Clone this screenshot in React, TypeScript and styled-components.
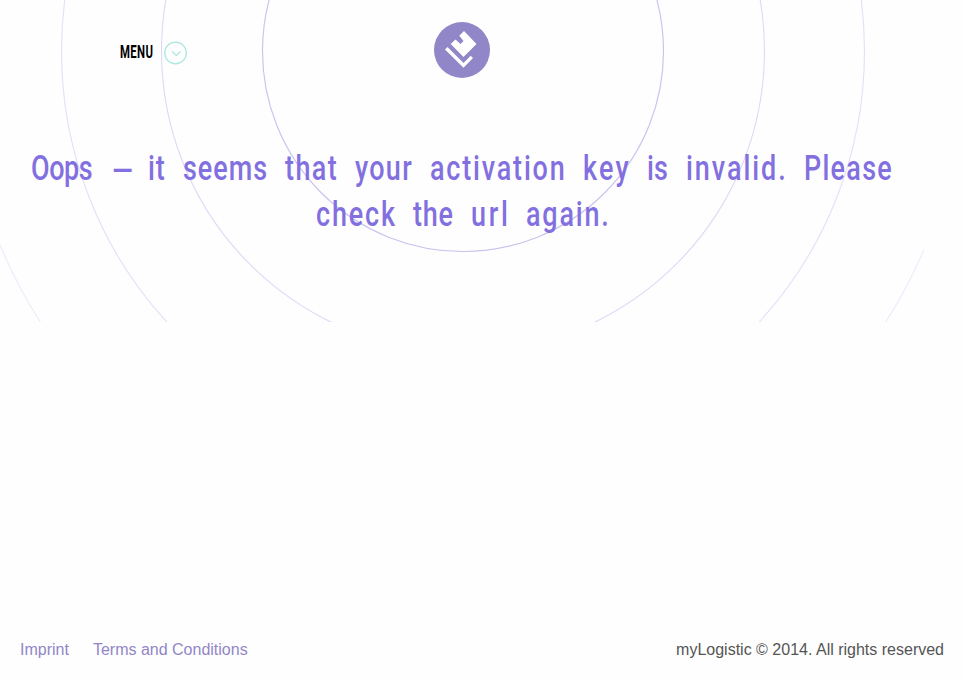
import { useLayoutEffect, useRef, useState } from "react";
import styled, { createGlobalStyle } from "styled-components";

const GlobalStyle = createGlobalStyle`
  body {
    margin: 0;
    background: #fefefe;
    font-family: "Liberation Sans", Arial, sans-serif;
    overflow: hidden;
  }
`;

const Page = styled.div`
  display: flex;
  flex-direction: column;
  justify-content: space-between;
  height: 679px;
`;

const Hero = styled.section`
  position: relative;
  width: 924px;
  height: 322px;
`;

const Rings = styled.svg`
  position: absolute;
  inset: 0;
`;

const Header = styled.header`
  position: relative;
  display: grid;
  grid-template-columns: 434px 56px;
  padding-top: 22px;
  height: 56px;
`;

const MenuButton = styled.div`
  display: flex;
  align-items: center;
  gap: 11px;
  padding: 4px 0 0 120px;
  height: 54px;
  color: #000;
`;

const MenuLabel = styled.div`
  display: flex;
  height: 22px;
  line-height: 20px;
  font-family: Roboto, sans-serif;
  font-size: 17.5px;
  font-weight: 700;
`;

const Title = styled.h1`
  position: relative;
  margin: 68px 0 0;
  color: #8370e0;
  font-family: Roboto, sans-serif;
  font-size: 35px;
  font-weight: 500;
`;

const Line = styled.div<{ $start: number }>`
  display: flex;
  gap: 18px;
  height: 46px;
  line-height: 46px;
  padding-left: ${(p) => p.$start}px;
`;

const WordBox = styled.span<{ $width: number; $drop: number }>`
  display: block;
  flex: none;
  width: ${(p) => p.$width}px;
  margin-top: ${(p) => p.$drop}px;
`;

const Glyphs = styled.span<{ $squeeze: number }>`
  display: inline-block;
  white-space: nowrap;
  transform: scaleX(${(p) => p.$squeeze});
  transform-origin: 0 50%;
`;

const Footer = styled.footer`
  display: flex;
  justify-content: space-between;
  height: 38px;
  padding: 0 20px;
  font-size: 16px;
  line-height: 18px;
  color: #555;
`;

const Links = styled.nav`
  display: flex;
  gap: 24px;
`;

const FooterLink = styled.a`
  color: #9186c7;
`;

type WordProps = { text: string; width: number; squeeze?: number; drop?: number };

/** Condensed word whose tracking is computed to fill the given width. */
function Word({ text, width, squeeze = 0.77, drop = 0 }: WordProps) {
  const ref = useRef<HTMLSpanElement>(null);
  const [tracking, setTracking] = useState(0);
  useLayoutEffect(() => {
    if (ref.current && text.length > 1) {
      const natural = ref.current.offsetWidth - tracking * text.length;
      setTracking((width / squeeze - natural) / (text.length - 1));
    }
  }, []);
  return (
    <WordBox $width={width} $drop={drop}>
      <Glyphs ref={ref} $squeeze={squeeze} style={{ letterSpacing: tracking }}>
        {text}
      </Glyphs>
    </WordBox>
  );
}

const lines: { start: number; words: WordProps[] }[] = [
  {
    start: 31,
    words: [
      { text: "Oops", width: 62 },
      { text: "–", width: 19, squeeze: 1.02, drop: 3 },
      { text: "it", width: 17 },
      { text: "seems", width: 84 },
      { text: "that", width: 52 },
      { text: "your", width: 57 },
      { text: "activation", width: 135 },
      { text: "key", width: 46 },
      { text: "is", width: 21 },
      { text: "invalid.", width: 100 },
      { text: "Please", width: 88 },
    ],
  },
  {
    start: 316,
    words: [
      { text: "check", width: 79 },
      { text: "the", width: 40 },
      { text: "url", width: 37 },
      { text: "again.", width: 83 },
    ],
  },
];

const rings = [
  { r: 200.5, color: "#c9c3ee" },
  { r: 301.5, color: "#dedaf6" },
  { r: 401.5, color: "#e4e0f8" },
  { r: 502, color: "#edebfa" },
];

export default function App() {
  return (
    <>
      <GlobalStyle />
      <Page>
        <Hero>
          <Rings width="924" height="322" fill="none">
            {rings.map((ring) => (
              <circle key={ring.r} cx="463" cy="51" r={ring.r} stroke={ring.color} strokeWidth="1.15" />
            ))}
          </Rings>
          <Header>
            <MenuButton>
              <MenuLabel>
                <Word text="MENU" width={33} squeeze={0.65} />
              </MenuLabel>
              <svg width="24" height="24" fill="none" stroke="#a8e6df" strokeWidth="1.2">
                <circle cx="11.5" cy="12" r="10.8" />
                <path d="M8 10.500 12.300 14.500 16.600 10.500" />
              </svg>
            </MenuButton>
            <svg width="56" height="56">
              <circle cx="28" cy="28" r="28" fill="#9186c7" />
              <path
                fill="#fff"
                d="M30 9 42.5 22 29.5 35 16.700 22 21.500 17.500 26.500 22 29.500 19 25.300 13.700Z M13.500 25 29.500 41 36.700 33.700 39 36 29.500 45.700 11 27.500Z"
              />
            </svg>
          </Header>
          <Title>
            {lines.map((line) => (
              <Line key={line.start} $start={line.start}>
                {line.words.map((word) => (
                  <Word key={word.text} {...word} />
                ))}
              </Line>
            ))}
          </Title>
        </Hero>
        <Footer>
          <Links>
            <FooterLink>Imprint</FooterLink>
            <FooterLink>Terms and Conditions</FooterLink>
          </Links>
          <span>myLogistic © 2014. All rights reserved</span>
        </Footer>
      </Page>
    </>
  );
}
